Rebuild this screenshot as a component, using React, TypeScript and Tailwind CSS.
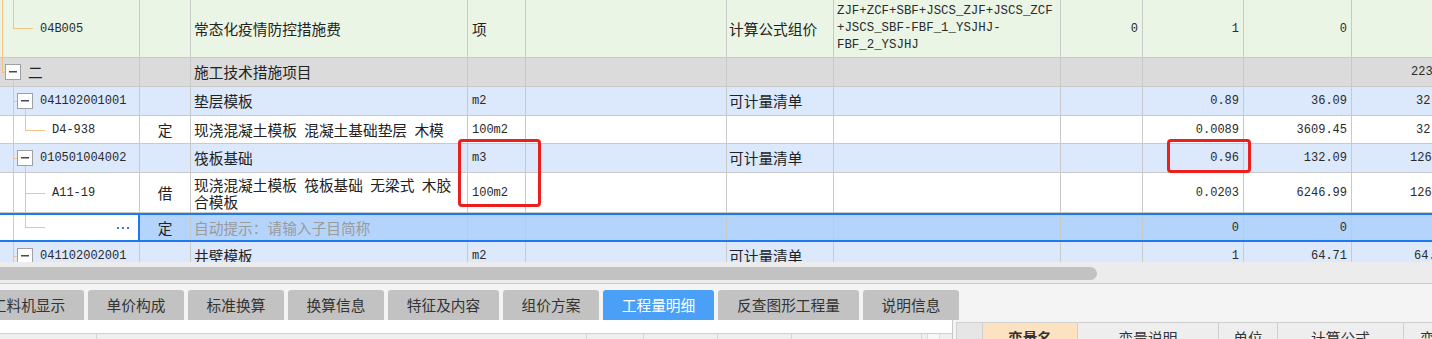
import React from "react";

const CJK = "font-['Noto_Sans_CJK_SC',sans-serif]";
const MONO = "font-['Liberation_Mono',monospace]";
const SP = "\u2002";
const LINE = "#f5c385";

const COLS = [
  "w-[140px]",
  "w-[51px]",
  "w-[277px]",
  "w-[58px]",
  "w-[201px]",
  "w-[107px]",
  "w-[227px]",
  "w-[82px]",
  "w-[101px]",
  "w-[108px]",
  "w-[200px]",
];

function C({
  i,
  className = "",
  bd = "border-r border-[#c9c9c9]",
  children,
}: {
  i: number;
  className?: string;
  bd?: string;
  children?: React.ReactNode;
}) {
  return (
    <div
      className={`${COLS[i]} shrink-0 h-full ${bd} flex items-center overflow-hidden whitespace-nowrap ${className}`}
    >
      {children}
    </div>
  );
}

function Num({ i, children }: { i: number; children?: React.ReactNode }) {
  return (
    <C i={i} className={`justify-end pr-[4px] ${MONO} text-[12px] text-[#2a2a2a]`}>
      {children}
    </C>
  );
}

const V = (x: number, y1: number, y2: number) => (
  <rect key={`v${x}-${y1}`} x={x} y={y1} width={1} height={y2 - y1} fill={LINE} />
);
const H = (y: number, x1: number, x2: number) => (
  <rect key={`h${y}-${x1}`} x={x1} y={y} width={x2 - x1} height={1} fill={LINE} />
);
const B = (x: number) => (
  <g key={`b${x}`}>
    <rect x={x + 0.5} y={6.5} width={15} height={15} fill="#ffffff" stroke="#a0a0a0" />
    <rect x={x + 4} y={13} width={8} height={1.5} fill="#4a4a4a" />
  </g>
);

function Tree({ h, children }: { h: number; children: React.ReactNode }) {
  return (
    <svg className="absolute left-0 top-0" width={140} height={h}>
      {children}
    </svg>
  );
}

function Row({
  h,
  bg,
  sel = false,
  children,
}: {
  h: string;
  bg: string;
  sel?: boolean;
  children: React.ReactNode;
}) {
  return (
    <div
      className={`flex ${h} ${bg} ${sel ? "border-y-2 border-[#1e78f0]" : "border-b border-[#c9c9c9]"}`}
    >
      {children}
    </div>
  );
}

const Code = ({ children, ml }: { children: React.ReactNode; ml: string }) => (
  <span className={`relative ${ml} ${MONO} text-[12px] text-[#2a2a2a]`}>{children}</span>
);

const TABS: { t: string; w: string; active?: boolean }[] = [
  { t: "工料机显示", w: "w-[111px]" },
  { t: "单价构成", w: "w-[96px]" },
  { t: "标准换算", w: "w-[96px]" },
  { t: "换算信息", w: "w-[96px]" },
  { t: "特征及内容", w: "w-[111px]" },
  { t: "组价方案", w: "w-[96px]" },
  { t: "工程量明细", w: "w-[111px]", active: true },
  { t: "反查图形工程量", w: "w-[141px]" },
  { t: "说明信息", w: "w-[96px]" },
];

export default function App() {
  return (
    <div
      className={`relative w-[1432px] h-[339px] overflow-hidden bg-[#f4f4f4] text-[#222] ${CJK} text-[14.7px] leading-[18px]`}
    >
      {/* main grid */}
      <div className="h-[262px] overflow-hidden bg-white">
        {/* row 1 */}
        <Row h="h-[58px]" bg="bg-[#ebf5e5]">
          <C i={0} className="relative">
            <Tree h={58}>{[V(2, 0, 58), V(13, 0, 28), H(28, 13, 33)]}</Tree>
            <Code ml="ml-[40px]">04B005</Code>
          </C>
          <C i={1} />
          <C i={2} className="pl-[3px]">常态化疫情防控措施费</C>
          <C i={3} className="pl-[4px]">项</C>
          <C i={4} />
          <C i={5} className="pl-[2px]">计算公式组价</C>
          <C i={6} className={`pl-[3px] ${MONO} text-[12.4px] leading-[17px] text-[#2a2a2a]`}>
            <div>
              ZJF+ZCF+SBF+JSCS_ZJF+JSCS_ZCF
              <br />
              +JSCS_SBF-FBF_1_YSJHJ-
              <br />
              FBF_2_YSJHJ
            </div>
          </C>
          <Num i={7}>0</Num>
          <Num i={8}>1</Num>
          <Num i={9}>0</Num>
          <C i={10} />
        </Row>

        {/* row 2 */}
        <Row h="h-[29px]" bg="bg-[#dbdbdb]">
          <C i={0} className="relative">
            <Tree h={29}>{[V(2, 0, 14), H(14, 2, 5), B(5), V(13, 22, 29)]}</Tree>
            <span className="relative ml-[28px]">二</span>
          </C>
          <C i={1} />
          <C i={2} className="pl-[3px]">施工技术措施项目</C>
          <C i={3} />
          <C i={4} />
          <C i={5} />
          <C i={6} />
          <C i={7} />
          <C i={8} />
          <C i={9} />
          <C i={10} className={`pl-[59px] ${MONO} text-[12px] text-[#2a2a2a]`}>223.45</C>
        </Row>

        {/* row 3 */}
        <Row h="h-[29px]" bg="bg-[#dce8fb]">
          <C i={0} className="relative">
            <Tree h={29}>{[V(13, 0, 29), H(14, 13, 17), B(17), V(25, 22, 29)]}</Tree>
            <Code ml="ml-[40px]">041102001001</Code>
          </C>
          <C i={1} />
          <C i={2} className="pl-[3px]">垫层模板</C>
          <C i={3} className={`pl-[4px] ${MONO} text-[12px] text-[#2a2a2a]`}>m2</C>
          <C i={4} />
          <C i={5} className="pl-[2px]">可计量清单</C>
          <C i={6} />
          <C i={7} />
          <Num i={8}>0.89</Num>
          <Num i={9}>36.09</Num>
          <C i={10} className={`pl-[64px] ${MONO} text-[12px] text-[#2a2a2a]`}>32.12</C>
        </Row>

        {/* row 4 */}
        <Row h="h-[28px]" bg="bg-white">
          <C i={0} className="relative">
            <Tree h={28}>{[V(13, 0, 28), V(25, 0, 14), H(14, 25, 45)]}</Tree>
            <Code ml="ml-[52px]">D4-938</Code>
          </C>
          <C i={1} className="justify-center">定</C>
          <C i={2} className="pl-[3px]">
            现浇混凝土模板{SP}混凝土基础垫层{SP}木模
          </C>
          <C i={3} className={`pl-[4px] ${MONO} text-[12px] text-[#2a2a2a]`}>100m2</C>
          <C i={4} />
          <C i={5} />
          <C i={6} />
          <C i={7} />
          <Num i={8}>0.0089</Num>
          <Num i={9}>3609.45</Num>
          <C i={10} className={`pl-[64px] ${MONO} text-[12px] text-[#2a2a2a]`}>32.12</C>
        </Row>

        {/* row 5 */}
        <Row h="h-[29px]" bg="bg-[#dce8fb]">
          <C i={0} className="relative">
            <Tree h={29}>{[V(13, 0, 29), H(14, 13, 17), B(17), V(25, 22, 29)]}</Tree>
            <Code ml="ml-[40px]">010501004002</Code>
          </C>
          <C i={1} />
          <C i={2} className="pl-[3px]">筏板基础</C>
          <C i={3} className={`pl-[4px] ${MONO} text-[12px] text-[#2a2a2a]`}>m3</C>
          <C i={4} />
          <C i={5} className="pl-[2px]">可计量清单</C>
          <C i={6} />
          <C i={7} />
          <Num i={8}>0.96</Num>
          <Num i={9}>132.09</Num>
          <C i={10} className={`pl-[58px] ${MONO} text-[12px] text-[#2a2a2a]`}>126.81</C>
        </Row>

        {/* row 6 */}
        <Row h="h-[40px]" bg="bg-white">
          <C i={0} className="relative">
            <Tree h={40}>{[V(13, 0, 40), V(25, 0, 40), H(20, 25, 45)]}</Tree>
            <Code ml="ml-[52px]">A11-19</Code>
          </C>
          <C i={1} className="justify-center">借</C>
          <C i={2} className="pl-[3px] leading-[17px]">
            <div>
              现浇混凝土模板{SP}筏板基础{SP}无梁式{SP}木胶
              <br />
              合模板
            </div>
          </C>
          <C i={3} className={`pl-[4px] ${MONO} text-[12px] text-[#2a2a2a]`}>100m2</C>
          <C i={4} />
          <C i={5} />
          <C i={6} />
          <C i={7} />
          <Num i={8}>0.0203</Num>
          <Num i={9}>6246.99</Num>
          <C i={10} className={`pl-[58px] ${MONO} text-[12px] text-[#2a2a2a]`}>126.81</C>
        </Row>

        {/* row 7 (selected) */}
        <Row h="h-[29px]" bg="bg-[#b4d4fc]" sel>
          <C i={0} className="relative bg-white justify-end pr-[9px]" bd="border-r-2 border-[#1e78f0]">
            <Tree h={25}>{[V(13, 0, 25), V(25, 0, 12), H(12, 25, 45)]}</Tree>
            <div className="relative flex gap-[3px]">
              <div className="w-[2px] h-[2px] bg-[#2f7de1]" />
              <div className="w-[2px] h-[2px] bg-[#2f7de1]" />
              <div className="w-[2px] h-[2px] bg-[#2f7de1]" />
            </div>
          </C>
          <C i={1} className="justify-center">定</C>
          <C i={2} className="pl-[3px] text-[#9a9a9a]">自动提示：请输入子目简称</C>
          <C i={3} />
          <C i={4} />
          <C i={5} />
          <C i={6} />
          <C i={7} />
          <Num i={8}>0</Num>
          <Num i={9}>0</Num>
          <C i={10} />
        </Row>

        {/* row 8 */}
        <Row h="h-[29px]" bg="bg-[#dce8fb]">
          <C i={0} className="relative">
            <Tree h={29}>{[V(13, 0, 29), H(14, 13, 17), B(17), V(25, 22, 29)]}</Tree>
            <Code ml="ml-[40px]">041102002001</Code>
          </C>
          <C i={1} />
          <C i={2} className="pl-[3px]">井壁模板</C>
          <C i={3} className={`pl-[4px] ${MONO} text-[12px] text-[#2a2a2a]`}>m2</C>
          <C i={4} />
          <C i={5} className="pl-[2px]">可计量清单</C>
          <C i={6} />
          <C i={7} />
          <Num i={8}>1</Num>
          <Num i={9}>64.71</Num>
          <C i={10} className={`pl-[62px] ${MONO} text-[12px] text-[#2a2a2a]`}>64.71</C>
        </Row>
      </div>

      {/* horizontal scrollbar */}
      <div className="h-[22px] bg-[#ececec] pt-[5px] border-b border-[#c9c9c9]">
        <div className="h-[13px] w-[1097px] rounded-r-[7px] bg-[#c2c2c2]" />
      </div>

      {/* tabs */}
      <div className="h-[36px] pt-[6px] flex gap-[4px] ml-[-27px]">
        {TABS.map((t) => (
          <div
            key={t.t}
            className={`${t.w} shrink-0 h-[30px] flex items-center justify-center rounded-t-[3px] ${
              t.active ? "bg-[#4aa0f6] text-white" : "bg-[#c2c2c2] text-[#333]"
            }`}
          >
            {t.t}
          </div>
        ))}
      </div>

      {/* bottom panels */}
      <div className="flex h-[19px]">
        <div className="w-[953px] shrink-0 bg-white border-r border-[#c8c8c8] pt-[13px]">
          <div className="flex h-[6px] bg-[#efefef] border-t border-[#cfcfcf]">
            <div className="w-[97px] shrink-0 border-r border-[#d4d4d4]" />
            <div className="w-[490px] shrink-0 border-r border-[#d4d4d4]" />
            <div className="w-[57px] shrink-0 border-r border-[#d4d4d4]" />
            <div className="w-[74px] shrink-0 border-r border-[#d4d4d4]" />
            <div className="w-[74px] shrink-0 border-r border-[#d4d4d4]" />
            <div className="w-[130px] shrink-0 border-r border-[#d4d4d4]" />
            <div className="w-[5px] shrink-0" />
            <div className="w-[13px] shrink-0 bg-[#f7f7f7] border-x border-[#dcdcdc]" />
          </div>
        </div>
        <div className="flex-1 pl-[3px] pt-[2px]">
          <div className="flex h-[30px] border-t border-l border-[#cfcfcf] bg-[#eeeeee] text-[#333]">
            <div className="w-[26px] shrink-0 bg-[#e6e6e6] border-r border-[#cfcfcf]" />
            <div className="w-[95px] shrink-0 bg-[#fde2c1] border-r border-[#cfcfcf] flex items-center justify-center font-bold">
              变量名
            </div>
            <div className="w-[141px] shrink-0 border-r border-[#cfcfcf] flex items-center justify-center">
              变量说明
            </div>
            <div className="w-[59px] shrink-0 border-r border-[#cfcfcf] flex items-center justify-center">
              单位
            </div>
            <div className="w-[126px] shrink-0 border-r border-[#cfcfcf] flex items-center justify-center">
              计算公式
            </div>
            <div className="flex-1 flex items-center pl-[16px] whitespace-nowrap">变量值</div>
          </div>
        </div>
      </div>

      {/* red annotation boxes */}
      <div className="absolute left-[458px] top-[139px] w-[83px] h-[68px] border-[3px] border-[#ec1f1f] rounded-[4px]" />
      <div className="absolute left-[1167px] top-[139px] w-[84px] h-[34px] border-[3px] border-[#ec1f1f] rounded-[4px]" />
    </div>
  );
}
